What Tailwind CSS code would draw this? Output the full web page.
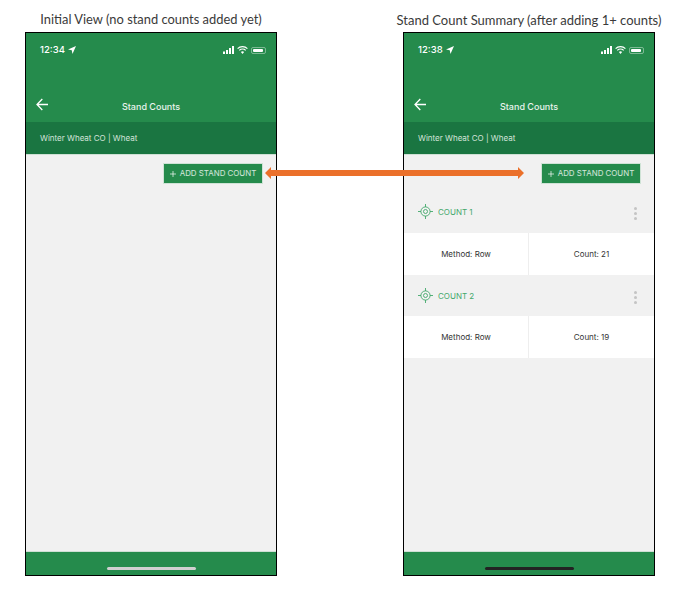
<!DOCTYPE html>
<html lang="en">
	<head>
		<meta charset="UTF-8" />
		<meta name="viewport" content="width=device-width, initial-scale=1.0" />
		<title>Stand Counts</title>
		<script src="https://cdn.jsdelivr.net/npm/@tailwindcss/browser@4"></script>
	</head>
	<body class="bg-white">
		<div class="relative w-[680px] h-[593px] overflow-hidden pl-[25px] flex gap-[126px] font-['Inter',sans-serif]">

			<!-- Initial view -->
			<div class="w-[252px] flex flex-col items-center">
				<div class="h-[32px] pt-[11px] text-[12.9px] leading-[16px] whitespace-nowrap text-[#3a3a3a] font-['Lato',sans-serif]">Initial View (no stand counts added yet)</div>
				<div class="w-[252px] h-[544px] border border-black flex flex-col bg-[#f1f1f1]">
					<div class="h-[89px] bg-[#258b4c] text-white flex flex-col shrink-0">
						<div class="flex items-center justify-between pl-[14px] pr-[10px] pt-[10px] h-[24px]">
							<div class="flex items-center gap-[3px] text-[9.5px] font-medium">12:34
								<svg class="w-[8px] h-[8px]" viewBox="0 0 10 10" fill="#fff"><path d="M10 0 0 4.5l4.7.7L5.6 10z"/></svg>
							</div>
							<div class="flex items-center gap-[3px]">
								<svg class="w-[11px] h-[8px]" viewBox="0 0 11 8" fill="#fff"><rect x="0" y="5.5" width="2" height="2.5"/><rect x="3" y="4" width="2" height="4"/><rect x="6" y="2" width="2" height="6"/><rect x="9" y="0" width="2" height="8"/></svg>
								<svg class="w-[11px] h-[8px]" viewBox="0 0 11 8" fill="none" stroke="#fff" stroke-width="1.2"><path d="M.6 2.6a7 7 0 0 1 9.8 0M2.3 4.4a4.6 4.6 0 0 1 6.4 0"/><path d="M5.5 8 3.9 6.1a2.3 2.3 0 0 1 3.2 0z" fill="#fff" stroke="none"/></svg>
								<div class="w-[15px] h-[7px] rounded-[2px] border border-white/40 p-px"><div class="w-[10px] h-full bg-white rounded-[1px]"></div></div>
							</div>
						</div>
						<div class="relative mt-[41px] flex items-center justify-center h-[18px]">
							<svg class="absolute left-[10px] top-0 w-[13px] h-[13px]" viewBox="0 0 13 13" fill="none" stroke="#fff" stroke-width="1.3"><path d="M12 6.5H1.2M6.3 1 1 6.5 6.3 12"/></svg>
							<span class="text-[9px] font-medium text-white/90">Stand Counts</span>
						</div>
					</div>
					<div class="h-[32px] bg-[#1a7541] text-[#d4e4da] text-[8px] flex items-center pl-[14px] shrink-0">Winter Wheat CO | Wheat</div>
					<div class="flex-1 border-t border-[#cfe0d5]">
						<div class="flex justify-end pr-[13px] pt-[8px]">
							<div class="w-[100px] h-[21px] bg-[#258b4c] border border-[#cfe3d6] text-white/80 text-[7.9px] flex items-center justify-center gap-[4px]">
								<svg class="w-[6px] h-[6px]" viewBox="0 0 7 7" stroke="#fff" stroke-width=".8"><path d="M3.5 0v7M0 3.5h7"/></svg>
								ADD STAND COUNT
							</div>
						</div>
					</div>
					<div class="h-[24px] bg-[#258b4c] border-t border-[#cfe0d5] flex justify-center items-end pb-[5px] shrink-0">
						<div class="w-[89px] h-[3px] rounded-full bg-[#d0d0d0]"></div>
					</div>
				</div>
			</div>

			<!-- Summary view -->
			<div class="w-[252px] flex flex-col items-center">
				<div class="h-[32px] pt-[12px] text-[13px] leading-[16px] whitespace-nowrap text-[#3a3a3a] font-['Lato',sans-serif]">Stand Count Summary (after adding 1+ counts)</div>
				<div class="w-[252px] h-[544px] border border-black flex flex-col bg-[#f1f1f1]">
					<div class="h-[89px] bg-[#258b4c] text-white flex flex-col shrink-0">
						<div class="flex items-center justify-between pl-[14px] pr-[10px] pt-[10px] h-[24px]">
							<div class="flex items-center gap-[3px] text-[9.5px] font-medium">12:38
								<svg class="w-[8px] h-[8px]" viewBox="0 0 10 10" fill="#fff"><path d="M10 0 0 4.5l4.7.7L5.6 10z"/></svg>
							</div>
							<div class="flex items-center gap-[3px]">
								<svg class="w-[11px] h-[8px]" viewBox="0 0 11 8" fill="#fff"><rect x="0" y="5.5" width="2" height="2.5"/><rect x="3" y="4" width="2" height="4"/><rect x="6" y="2" width="2" height="6"/><rect x="9" y="0" width="2" height="8"/></svg>
								<svg class="w-[11px] h-[8px]" viewBox="0 0 11 8" fill="none" stroke="#fff" stroke-width="1.2"><path d="M.6 2.6a7 7 0 0 1 9.8 0M2.3 4.4a4.6 4.6 0 0 1 6.4 0"/><path d="M5.5 8 3.9 6.1a2.3 2.3 0 0 1 3.2 0z" fill="#fff" stroke="none"/></svg>
								<div class="w-[15px] h-[7px] rounded-[2px] border border-white/40 p-px"><div class="w-[10px] h-full bg-white rounded-[1px]"></div></div>
							</div>
						</div>
						<div class="relative mt-[41px] flex items-center justify-center h-[18px]">
							<svg class="absolute left-[10px] top-0 w-[13px] h-[13px]" viewBox="0 0 13 13" fill="none" stroke="#fff" stroke-width="1.3"><path d="M12 6.5H1.2M6.3 1 1 6.5 6.3 12"/></svg>
							<span class="text-[9px] font-medium text-white/90">Stand Counts</span>
						</div>
					</div>
					<div class="h-[32px] bg-[#1a7541] text-[#d4e4da] text-[8px] flex items-center pl-[14px] shrink-0">Winter Wheat CO | Wheat</div>
					<div class="flex-1 border-t border-[#cfe0d5]">
						<div class="flex justify-end pr-[13px] pt-[8px]">
							<div class="w-[100px] h-[21px] bg-[#258b4c] border border-[#cfe3d6] text-white/80 text-[7.9px] flex items-center justify-center gap-[4px]">
								<svg class="w-[6px] h-[6px]" viewBox="0 0 7 7" stroke="#fff" stroke-width=".8"><path d="M3.5 0v7M0 3.5h7"/></svg>
								ADD STAND COUNT
							</div>
						</div>

						<!-- Count 1 -->
						<div class="h-[49px] pt-[6px] flex items-center pl-[14px] pr-[17px] justify-between">
							<div class="flex items-center gap-[5px] text-[#43a86b] text-[8px]">
								<svg class="w-[15px] h-[15px]" viewBox="0 0 15 15" fill="none" stroke="#43a86b" stroke-width=".9"><circle cx="7.5" cy="7.5" r="4.6"/><circle cx="7.5" cy="7.5" r="2"/><path d="M7.5 0v3M7.5 12v3M0 7.5h3M12 7.5h3"/></svg>
								COUNT 1
							</div>
							<div class="flex flex-col gap-[2px] mt-[3px]">
								<div class="w-[3px] h-[3px] rounded-full bg-[#c4c4c4]"></div>
								<div class="w-[3px] h-[3px] rounded-full bg-[#c4c4c4]"></div>
								<div class="w-[3px] h-[3px] rounded-full bg-[#c4c4c4]"></div>
							</div>
						</div>
						<div class="h-[42px] bg-white flex text-[8px] text-[#333]">
							<div class="w-[125px] border-r border-[#eeeeee] flex items-center justify-center">Method: Row</div>
							<div class="flex-1 flex items-center justify-center">Count: 21</div>
						</div>

						<!-- Count 2 -->
						<div class="h-[41px] flex items-center pl-[14px] pr-[17px] justify-between">
							<div class="flex items-center gap-[5px] text-[#43a86b] text-[8px]">
								<svg class="w-[15px] h-[15px]" viewBox="0 0 15 15" fill="none" stroke="#43a86b" stroke-width=".9"><circle cx="7.5" cy="7.5" r="4.6"/><circle cx="7.5" cy="7.5" r="2"/><path d="M7.5 0v3M7.5 12v3M0 7.5h3M12 7.5h3"/></svg>
								COUNT 2
							</div>
							<div class="flex flex-col gap-[2px] mt-[3px]">
								<div class="w-[3px] h-[3px] rounded-full bg-[#c4c4c4]"></div>
								<div class="w-[3px] h-[3px] rounded-full bg-[#c4c4c4]"></div>
								<div class="w-[3px] h-[3px] rounded-full bg-[#c4c4c4]"></div>
							</div>
						</div>
						<div class="h-[42px] bg-white flex text-[8px] text-[#333]">
							<div class="w-[125px] border-r border-[#eeeeee] flex items-center justify-center">Method: Row</div>
							<div class="flex-1 flex items-center justify-center">Count: 19</div>
						</div>
					</div>
					<div class="h-[24px] bg-[#258b4c] border-t border-[#cfe0d5] flex justify-center items-end pb-[5px] shrink-0">
						<div class="w-[89px] h-[3px] rounded-full bg-[#222]"></div>
					</div>
				</div>
			</div>

			<!-- Double arrow between the two screens -->
			<svg class="absolute left-[265px] top-[167px] w-[259px] h-[12px]" viewBox="0 0 259 12" fill="#eb702a"><path d="M0 6 6 0v3h247V0l6 6-6 6V9H6v3z"/></svg>
		</div>
	</body>
</html>
